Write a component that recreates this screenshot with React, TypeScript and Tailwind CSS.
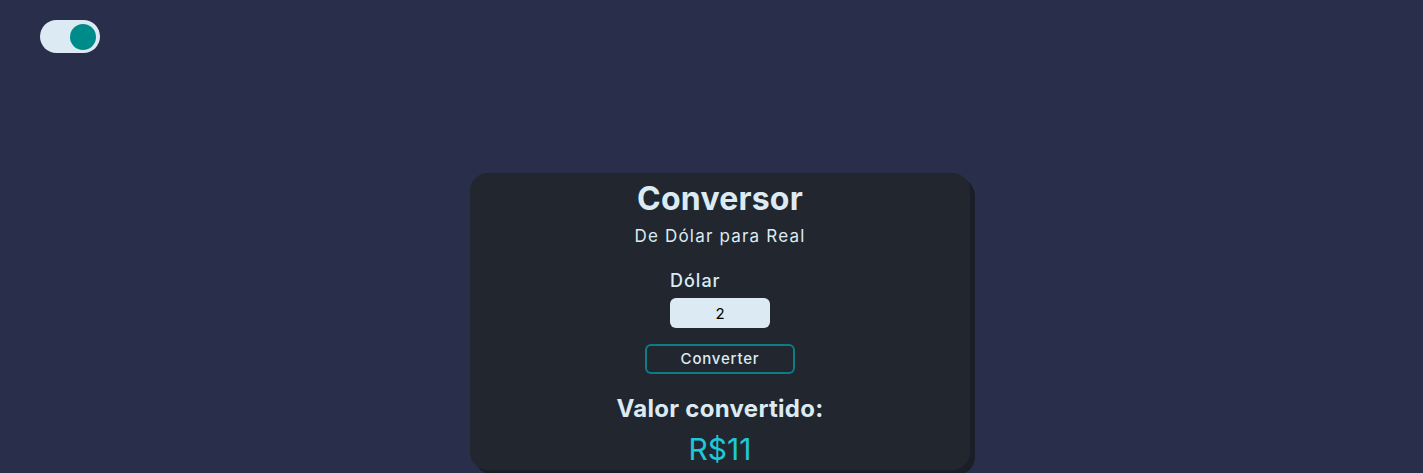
import React, { useState } from 'react';

const App: React.FC = () => {
  const [dark, setDark] = useState(true);
  const [dolar, setDolar] = useState('2');
  const [valor, setValor] = useState(11);

  const converter = () => setValor(Math.round(Number(dolar) * 5.5));

  return (
    <div className="min-h-screen w-full bg-[#292f4a] font-['Inter',sans-serif] text-[#dcebf3]">
      {/* toggle */}
      <div className="pt-5 pl-10">
        <button
          onClick={() => setDark(!dark)}
          className="flex h-[33px] w-[60px] items-center justify-end rounded-full bg-[#dcebf3] pr-[4px]"
        >
          <span className="h-[26px] w-[26px] rounded-full bg-[#008b8b]" />
        </button>
      </div>

      <div className="flex justify-center pl-[17px] pt-[120px]">
        <div className="flex h-[297px] w-[500px] flex-col items-center rounded-[18px] bg-[#22272f] pt-[4px] shadow-[5px_5px_0_#1b1e29]">
          <h1 className="text-[32px] font-bold leading-[44px] tracking-[0.2px]">Conversor</h1>
          <p className="mt-[3px] text-[17px] leading-6 tracking-[1.2px]">De Dólar para Real</p>

          <div className="mt-[21px] flex w-[100px] flex-col">
            <label className="text-[18px] font-medium leading-6 tracking-[1px]">Dólar</label>
            <input
              value={dolar}
              onChange={(e) => setDolar(e.target.value)}
              className="mt-[5px] h-[30px] w-[100px] rounded-[6px] bg-[#dcebf3] text-center text-[15px] text-black outline-none"
            />
          </div>

          <button
            onClick={converter}
            className="mt-[16px] h-[30px] w-[150px] rounded-[6px] border-2 border-[#0e7c86] text-[15px] font-medium tracking-[0.8px]"
          >
            Converter
          </button>

          <h2 className="mt-[19px] text-[24px] font-bold leading-8 tracking-[0.3px]">Valor convertido:</h2>
          <p className="mt-[6px] text-[30px] leading-9 text-[#1ec8d8]">R${valor}</p>
        </div>
      </div>
    </div>
  );
};

export default App;
